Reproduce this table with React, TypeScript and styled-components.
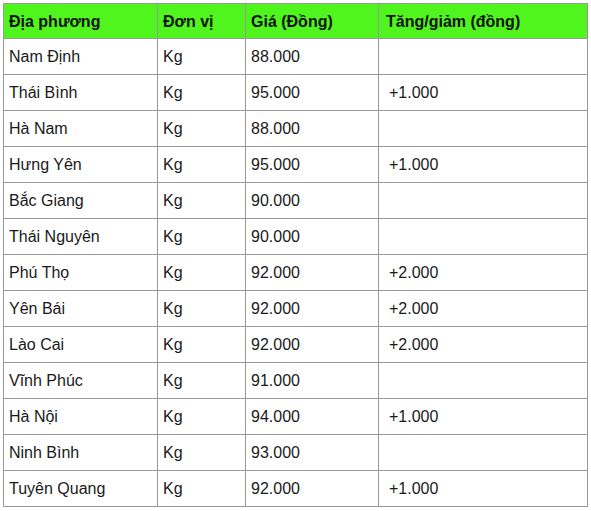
import styled, { createGlobalStyle } from "styled-components";

interface PriceRow {
  place: string;
  unit: string;
  price: string;
  change: string;
}

const rows: PriceRow[] = [
  { place: "Nam Định", unit: "Kg", price: "88.000", change: "" },
  { place: "Thái Bình", unit: "Kg", price: "95.000", change: "+1.000" },
  { place: "Hà Nam", unit: "Kg", price: "88.000", change: "" },
  { place: "Hưng Yên", unit: "Kg", price: "95.000", change: "+1.000" },
  { place: "Bắc Giang", unit: "Kg", price: "90.000", change: "" },
  { place: "Thái Nguyên", unit: "Kg", price: "90.000", change: "" },
  { place: "Phú Thọ", unit: "Kg", price: "92.000", change: "+2.000" },
  { place: "Yên Bái", unit: "Kg", price: "92.000", change: "+2.000" },
  { place: "Lào Cai", unit: "Kg", price: "92.000", change: "+2.000" },
  { place: "Vĩnh Phúc", unit: "Kg", price: "91.000", change: "" },
  { place: "Hà Nội", unit: "Kg", price: "94.000", change: "+1.000" },
  { place: "Ninh Bình", unit: "Kg", price: "93.000", change: "" },
  { place: "Tuyên Quang", unit: "Kg", price: "92.000", change: "+1.000" },
];

const GlobalStyle = createGlobalStyle`
  body {
    margin: 3px;
    background: #fff;
    font-family: "Liberation Sans", Arial, sans-serif;
  }
`;

const App = () => {
  return (
    <>
      <GlobalStyle />
      <Table>
        <colgroup>
          <col width={154} />
          <col width={88} />
          <col width={133} />
          <col width={209} />
        </colgroup>
        <thead>
          <tr>
            <Th>Địa phương</Th>
            <Th>Đơn vị</Th>
            <Th>Giá (Đồng)</Th>
            <Th $pad={7}>Tăng/giảm (đồng)</Th>
          </tr>
        </thead>
        <tbody>
          {rows.map((r) => (
            <tr key={r.place}>
              <Td>{r.place}</Td>
              <Td>{r.unit}</Td>
              <Td>{r.price}</Td>
              <Td $pad={10}>{r.change}</Td>
            </tr>
          ))}
        </tbody>
      </Table>
    </>
  );
};

export default App;

const Table = styled.table`
  width: 585px;
  border-collapse: collapse;
  table-layout: fixed;
  font-size: 16px;
  color: #1a1a1a;
`;

const Th = styled.th<{ $pad?: number }>`
  height: 35px;
  padding: 1px 5px 0 ${({ $pad }) => $pad ?? 5}px;
  box-sizing: border-box;
  background: #4ff51c;
  border: 1px solid #999;
  text-align: left;
  font-weight: bold;
  color: #111;
  vertical-align: middle;
`;

const Td = styled.td<{ $pad?: number }>`
  height: 36px;
  padding: 1px 5px 0 ${({ $pad }) => $pad ?? 5}px;
  box-sizing: border-box;
  border: 1px solid #999;
  text-align: left;
  vertical-align: middle;
`;
